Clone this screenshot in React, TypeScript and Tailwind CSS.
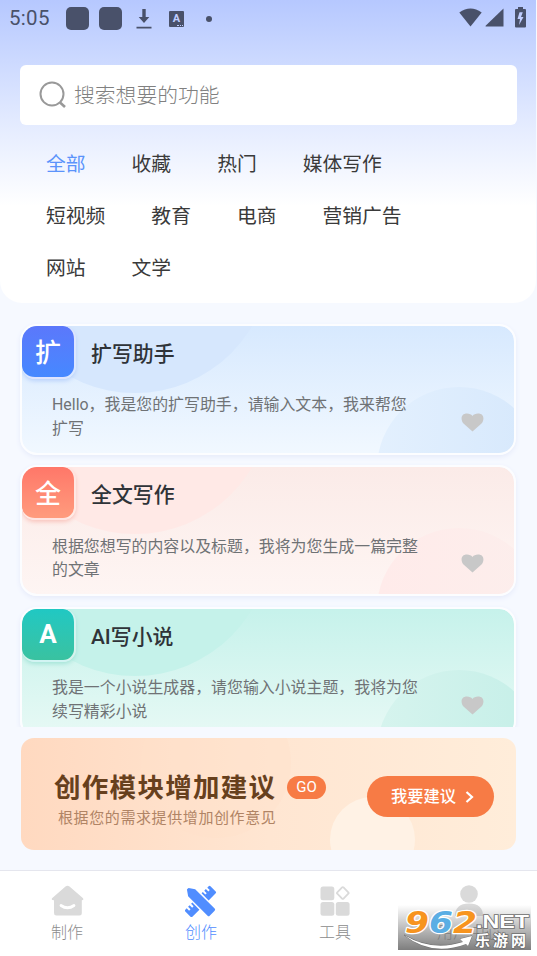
import React from "react";

type Card = {
  badge: string;
  title: string;
  text: string;
  badgeClass: string;
  bodyClass: string;
  topCircle: string;
  bottomCircle: string;
};

const categoryRows = [
  ["全部", "收藏", "热门", "媒体写作"],
  ["短视频", "教育", "电商", "营销广告"],
  ["网站", "文学"],
];

const cards: Card[] = [
  {
    badge: "扩",
    title: "扩写助手",
    text: "Hello，我是您的扩写助手，请输入文本，我来帮您扩写",
    badgeClass: "bg-linear-to-b from-[#5b78fb] to-[#4588ff] shadow-[0_2px_4px_#b9d2fb]",
    bodyClass: "bg-linear-to-b from-[#d7e9fe] to-[#f1f8ff]",
    topCircle: "bg-[#d6e7fd]",
    bottomCircle: "bg-linear-to-r from-[#e3f0fe] to-[#d6e8fc]",
  },
  {
    badge: "全",
    title: "全文写作",
    text: "根据您想写的内容以及标题，我将为您生成一篇完整的文章",
    badgeClass: "bg-linear-to-b from-[#ff7769] to-[#ff9b7d] shadow-[0_2px_4px_#f9c5bd]",
    bodyClass: "bg-linear-to-b from-[#fbebe8] to-[#fef5f3]",
    topCircle: "bg-[#ffe9e6]",
    bottomCircle: "bg-linear-to-r from-[#ffebea] to-[#fceeec]",
  },
  {
    badge: "A",
    title: "AI写小说",
    text: "我是一个小说生成器，请您输入小说主题，我将为您续写精彩小说",
    badgeClass: "bg-linear-to-b from-[#20c8c3] to-[#39c2a0] shadow-[0_2px_4px_#a5e4d8]",
    bodyClass: "bg-linear-to-b from-[#c6f2eb] to-[#e7f9f5]",
    topCircle: "bg-[#c5f2ea]",
    bottomCircle: "bg-linear-to-r from-[#d6f4ee] to-[#c5efe8]",
  },
];

const StatusBar: React.FC = () => (
  <div className="flex h-[37px] items-center pl-[9px] pr-[10px] text-[#49516a]">
    <span className="w-[57px] font-[Roboto] text-[20.5px] leading-none tracking-[0.3px]">5:05</span>
    <span className="h-[23px] w-[23px] rounded-[5px] bg-[#49516a]" />
    <span className="ml-[10px] h-[23px] w-[23px] rounded-[5px] bg-[#49516a]" />
    <svg className="ml-[14px]" width="16" height="22" viewBox="0 0 16 22" fill="currentColor">
      <path d="M6.3 1h3.4v8h3.6L8 15 2.7 9h3.6zM0.5 18.7h15v1.7h-15z" />
    </svg>
    <span className="relative ml-[17px] flex h-[16px] w-[15px] items-center justify-center rounded-[1px] bg-[#49516a] font-[Roboto] text-[11px] font-bold leading-none text-[#c0ceff]">
      A
      <span className="absolute bottom-px right-px h-[2px] w-[6px] border-b border-dotted border-[#c0ceff]" />
    </span>
    <span className="ml-[22px] h-[6px] w-[6px] rounded-full bg-[#49516a]" />
    <div className="-mt-[2px] ml-auto flex items-center">
      <svg width="23" height="19" viewBox="0 0 23 19" fill="currentColor">
        <path d="M0.3 4.5Q11.5-3.5 22.7 4.5L11.5 18.5z" />
      </svg>
      <svg className="ml-[3px]" width="19" height="19" viewBox="0 0 19 19" fill="currentColor">
        <path d="M18.5 0.5v18H1q-1 0-.4-.8z" />
      </svg>
      <svg className="ml-[11px]" width="11" height="21" viewBox="0 0 11 21" fill="currentColor">
        <path d="M3 0h5v2h2q1 0 1 1v16.500q0 1-1 1H1q-1 0-1-1V3q0-1 1-1h2z" />
        <path d="M7.8 5.200H4.500L2.500 12H5l-1 6 4.500-8H6z" fill="#c0ceff" />
      </svg>
    </div>
  </div>
);

const AssistantCard: React.FC<{ card: Card }> = ({ card }) => (
  <div className="h-[131px] shrink-0 rounded-[17px] shadow-[0_2px_5px_#e6ebfa]">
    <div
      className={`relative h-full overflow-hidden rounded-[17px] border-2 border-[#fcfdff] bg-clip-padding ${card.bodyClass}`}
    >
      <div className={`absolute -left-[23px] -top-[205px] h-[272px] w-[272px] rounded-full ${card.topCircle}`} />
      <div className={`absolute left-[355px] top-[61px] h-[164px] w-[164px] rounded-full ${card.bottomCircle}`} />
      <div className="relative flex items-start">
        <div
          className={`flex h-[53px] w-[54px] items-center justify-center rounded-[13px] border-b-2 border-r-2 border-white/80 text-[26px] font-medium leading-none text-white ${card.badgeClass}`}
        >
          <span className={card.badge === "A" ? "font-[Roboto] font-bold" : "mt-[3px]"}>{card.badge}</span>
        </div>
        <h2 className="ml-[15px] mt-[13px] text-[20.900px] font-medium leading-[30px] text-[#2f3338]">{card.title}</h2>
      </div>
      <p className="relative ml-[30px] mt-[14.500px] w-[370px] text-[15.920px] leading-[23.700px] text-[#6f7275]">
        {card.text}
      </p>
      <svg className="absolute left-[439px] top-[87px]" width="23" height="19" viewBox="0 0 23 19" fill="#c8c8c8">
        <path d="M11.500 18.500L2.500 10.500C-.5 7-.5.600 6 .600c2.500 0 4.200.900 5.500 2.300C12.800 1.500 14.500.600 17 .600c6.500 0 6.500 6.400 3.500 9.900z" />
      </svg>
    </div>
  </div>
);

const Banner: React.FC = () => (
  <div className="relative ml-[21px] mt-[11px] flex h-[112px] w-[495px] shrink-0 overflow-hidden rounded-[13px] bg-linear-to-r from-[#ffd9c0] via-[#ffe6d2] to-[#ffedda]">
    <div className="absolute -top-[50px] left-[120px] h-[150px] w-[150px] rounded-full bg-[#ffe0ca]/40" />
    <div className="absolute left-[309px] top-[59px] h-[85px] w-[85px] rounded-full bg-[#fff2e5]" />
    <div className="relative ml-[33px] mt-[31px]">
      <div className="flex items-center">
        <h3 className="w-[233px] whitespace-nowrap pt-px text-[26.500px] font-bold leading-[36px] tracking-[1.300px] text-[#67401d]">
          创作模块增加建议
        </h3>
        <span className="-mt-px flex h-[23px] w-[39px] items-center justify-center rounded-full bg-[#f77b45] font-[Roboto] text-[15px] text-white">
          GO
        </span>
      </div>
      <p className="ml-[4px] text-[15px] leading-[24px] tracking-[0.600px] text-[#b08465]">根据您的需求提供增加创作意见</p>
    </div>
    <button
      type="button"
      className="absolute right-[22px] top-[38px] flex h-[41px] w-[127px] items-center rounded-full bg-[#f77b45] pl-[24px] pt-px text-[16.300px] font-medium text-white"
    >
      我要建议
      <svg className="ml-[9px]" width="9" height="12" viewBox="0 0 9 12" fill="none" stroke="currentColor" strokeWidth="2.200">
        <path d="M1.500 1l5.500 5-5.500 5" />
      </svg>
    </button>
  </div>
);

const HomeIcon = () => (
  <svg width="33" height="32" viewBox="0 0 33 32">
    <path d="M14.500 1.600q2-1.500 4 0L31.800 13q1.600 2-1 2.300V28q0 2.500-2.500 2.500h-23Q3 30.500 3 28V15.300Q-.4 15 1.300 13z" fill="#dadada" />
    <path d="M10 20.500q6.500 4.500 13 0" fill="none" stroke="#fff" strokeWidth="2.800" strokeLinecap="round" />
  </svg>
);

// pencil and ruler crossed at 45 degrees
const CreateIcon = () => (
  <svg width="32" height="32" viewBox="0 0 32 32" fill="#508dff">
    <path
      d="M-18 -1.200Q-18.500 0-18 1.200L-12.500 5H15q1.500 0 1.500-1.500v-7Q16.500-5 15-5H-12.500z"
      transform="translate(15.500 16.500) rotate(45)"
    />
    <g transform="translate(15.500 16.500) rotate(-45)">
      <path d="M6.500-5h1.800v3.500h2V-5h2.300v3.500h2V-5H16.500q1.300 0 1.300 1.300v7.400Q17.800 5 16.500 5H6.500z" />
      <path d="M-6.500-5h-1.800v3.500h-2V-5h-2.300v3.500h-2V-5H-16.500q-1.300 0-1.300 1.300v7.400Q-17.800 5-16.500 5H-6.500z" />
    </g>
  </svg>
);

const ToolsIcon = () => (
  <svg width="30" height="31" viewBox="0 0 30 31" fill="#dadada">
    <rect x="0.500" y="1.500" width="13.800" height="13.800" rx="2.500" />
    <rect x="0.500" y="17" width="13.800" height="13.800" rx="2.500" />
    <rect x="15.800" y="17" width="13.800" height="13.800" rx="2.500" />
    <rect x="18.400" y="3.600" width="8.800" height="8.800" rx="1" transform="rotate(45 22.800 8)" fill="none" stroke="#dadada" strokeWidth="1.800" />
  </svg>
);

const UserIcon = () => (
  <svg width="30" height="32" viewBox="0 0 30 32" fill="#dadada">
    <circle cx="15" cy="9" r="8.800" />
    <path d="M1 31q0-12.500 14-12.500T29 31z" />
  </svg>
);

const tabs = [
  { label: "制作", icon: <HomeIcon /> },
  { label: "创作", icon: <CreateIcon />, active: true },
  { label: "工具", icon: <ToolsIcon /> },
  { label: "用户中心", icon: <UserIcon /> },
];

const Watermark: React.FC = () => (
  <div className="absolute left-[398px] top-[34px] h-[45px] w-[133px] bg-linear-to-b from-[#777777]/0 to-[#777777]/95">
    <svg className="overflow-visible" width="133" height="45" viewBox="0 0 133 45">
      <g fontFamily="DejaVu Sans" fontWeight="bold" fontStyle="italic" paintOrder="stroke" stroke="#fff" strokeWidth="2.500" strokeLinejoin="round" fontSize="31">
        <text x="7" y="28" textLength="24" lengthAdjust="spacingAndGlyphs" fill="#f7941e">9</text>
        <text x="31" y="28" textLength="24" lengthAdjust="spacingAndGlyphs" fill="#5baee4">6</text>
        <text x="55" y="28" textLength="24" lengthAdjust="spacingAndGlyphs" fill="#f7941e">2</text>
      </g>
      <g fill="#fff" stroke="#6d6d6d" strokeWidth="1.500" paintOrder="stroke">
        <text x="78" y="23" fontFamily="Liberation Sans" fontWeight="bold" fontSize="19" textLength="53" lengthAdjust="spacingAndGlyphs">.NET</text>
        <text x="77" y="40.500" fontFamily="Noto Sans CJK SC" fontWeight="bold" fontSize="15" textLength="51">乐游网</text>
        <path d="M6 30Q34 47 65 37l-3-3 12-3-4 10-2-2Q34 52 6 30z" strokeWidth="0.800" />
      </g>
    </svg>
  </div>
);

export default function App() {
  return (
    <div className="flex h-[956px] w-[537px] flex-col overflow-hidden bg-[#f6f9ff] font-[Roboto,'Noto_Sans_CJK_SC',sans-serif]">
      <header className="h-[303px] w-[536px] shrink-0 rounded-b-[22px] bg-linear-to-b from-[#b6c8ff] via-[#e5ecff] via-42% to-white to-68%">
        <StatusBar />
        <div className="ml-[20px] mt-[28px] flex h-[59.500px] w-[497px] items-center rounded-[6px] bg-white pl-[19px]">
          <svg width="28" height="28" viewBox="0 0 28 28" fill="none" stroke="#999" strokeWidth="2">
            <circle cx="13" cy="13" r="11.500" />
            <path d="M21 21.500l5 4.500" strokeWidth="2.600" />
          </svg>
          <span className="ml-[7px] pt-[4px] text-[20.800px] font-light leading-none text-[#808080]">搜索想要的功能</span>
        </div>
        <div className="pl-[46px] pt-[14.500px]">
          {categoryRows.map((row, r) => (
            <div key={r} className="flex h-[52px] items-center gap-[46px]">
              {row.map((name) => (
                <span
                  key={name}
                  className={`text-[19.800px] leading-none ${name === "全部" ? "text-[#5b93fb]" : "text-[#3a3a3a]"}`}
                >
                  {name}
                </span>
              ))}
            </div>
          ))}
        </div>
      </header>

      <main className="flex h-[424px] shrink-0 flex-col gap-[10.500px] overflow-hidden pl-[20px] pr-[21px] pt-[20.500px]">
        {cards.map((card) => (
          <AssistantCard key={card.title} card={card} />
        ))}
      </main>

      <Banner />

      <nav className="relative mt-[20px] grid h-[86px] shrink-0 grid-cols-4 border-t border-[#e5e6ee] bg-white pr-px">
        {tabs.map((tab) => (
          <div key={tab.label} className="flex flex-col items-center pt-[13px]">
            <div className="flex h-[33px] items-center">{tab.icon}</div>
            <span className={`mt-[4px] text-[16px] font-light leading-[24px] ${tab.active ? "text-[#508dff]" : "text-[#8c8c8c]"}`}>
              {tab.label}
            </span>
          </div>
        ))}
        <Watermark />
      </nav>
    </div>
  );
}
